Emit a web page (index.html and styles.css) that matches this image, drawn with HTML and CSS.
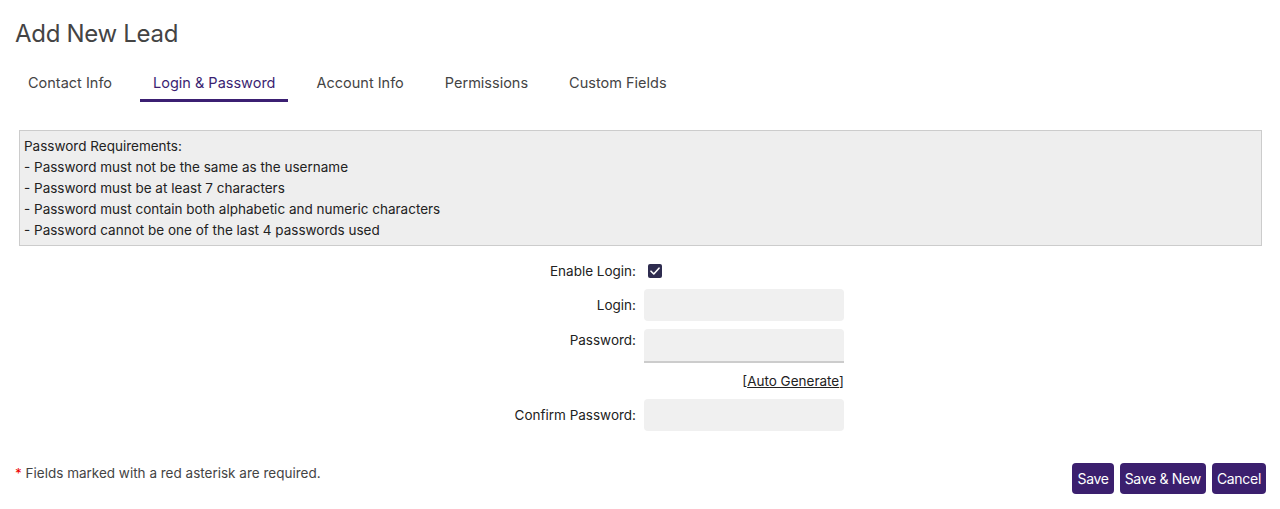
FILE: index.html
```html
<!DOCTYPE html>
<html lang="en">

<head>
    <meta charset="UTF-8">
    <meta name="viewport" content="width=device-width, initial-scale=1.0">
    <title>Add New Lead</title>
    <link rel="stylesheet" href="styles.css">
</head>

<body>
    <h1 class="page-title">Add New Lead</h1>

    <nav class="tabs">
        <a class="tab">Contact Info</a>
        <a class="tab active">Login &amp; Password</a>
        <a class="tab">Account Info</a>
        <a class="tab">Permissions</a>
        <a class="tab">Custom Fields</a>
    </nav>

    <div class="requirements">
        <div>Password Requirements:</div>
        <div>- Password must not be the same as the username</div>
        <div>- Password must be at least 7 characters</div>
        <div>- Password must contain both alphabetic and numeric characters</div>
        <div>- Password cannot be one of the last 4 passwords used</div>
    </div>

    <form class="login-form">
        <div class="row row-check">
            <label class="field-label" for="enableLogin">Enable Login:</label>
            <span class="checkbox" id="enableLogin">
                <svg width="10" height="8" viewBox="0 0 10 8">
                    <path d="M1 4.2 L3.8 7 L9 1.2" fill="none" stroke="#fff" stroke-width="1.6" stroke-linecap="round" stroke-linejoin="round" />
                </svg>
            </span>
        </div>
        <div class="row">
            <label class="field-label" for="login">Login:</label>
            <input type="text" id="login" class="field">
        </div>
        <div class="row row-password">
            <label class="field-label" for="password">Password:</label>
            <input type="password" id="password" class="field field-underline">
        </div>
        <div class="row row-link">
            <span class="auto-gen">[<a href="#">Auto Generate</a>]</span>
        </div>
        <div class="row">
            <label class="field-label" for="confirm">Confirm Password:</label>
            <input type="password" id="confirm" class="field">
        </div>
    </form>

    <footer class="footer">
        <p class="note"><span class="star">*</span> Fields marked with a red asterisk are required.</p>
        <div class="actions">
            <button type="button">Save</button>
            <button type="button">Save &amp; New</button>
            <button type="button">Cancel</button>
        </div>
    </footer>
</body>

</html>
```

FILE: styles.css
```css
body {
    margin: 0;
    padding: 0 14px 0 15px;
    font-family: Inter, "Noto Sans", sans-serif;
    color: #3f3f46;
    background: #fff;
}

.page-title {
    margin: 0;
    padding-top: 19px;
    font-size: 24px;
    font-weight: 400;
    line-height: 30px;
    color: #444;
    letter-spacing: -0.3px;
}

.tabs {
    display: flex;
    gap: 15px;
    margin-top: 24px;
}

.tab {
    padding: 0 13px 7px;
    font-size: 14.5px;
    line-height: 19px;
    color: #444;
    border-bottom: 3px solid transparent;
    cursor: pointer;
}

.tab.active {
    color: #3b1f72;
    border-bottom-color: #3b1f72;
}

.requirements {
    margin: 28px 4px 0 4px;
    padding: 5px 4px 4px;
    background-color: #eee;
    border: 1px solid #ccc;
    font-size: 13.5px;
    line-height: 21px;
    color: #222;
}

.login-form {
    display: flex;
    flex-direction: column;
    gap: 8px;
    margin-top: 15px;
}

.row {
    display: flex;
    align-items: center;
    gap: 8px;
}

.field-label {
    width: 621px;
    text-align: right;
    font-size: 13.5px;
    color: #222;
}

.row-check {
    height: 20px;
}

.checkbox {
    display: flex;
    align-items: center;
    justify-content: center;
    width: 14px;
    height: 14px;
    margin-left: 4px;
    background-color: #2e2c4f;
    border-radius: 2px;
}

.field {
    width: 200px;
    height: 32px;
    box-sizing: border-box;
    padding: 0 8px;
    background-color: #f0f0f0;
    border: none;
    border-radius: 4px;
    font-family: inherit;
}

.row-password {
    align-items: flex-start;
}

.row-password .field-label {
    padding-top: 3px;
}

.field-underline {
    height: 34px;
    border-bottom: 2px solid #ccc;
    border-radius: 4px 4px 0 0;
}

.row-link {
    width: 829px;
    justify-content: flex-end;
    margin-top: 2px;
    margin-bottom: 2px;
}

.auto-gen {
    font-size: 13.5px;
    color: #222;
}

.auto-gen a {
    color: #222;
}

.footer {
    display: flex;
    justify-content: space-between;
    align-items: flex-start;
    margin-top: 32px;
}

.note {
    margin: 0;
    padding-top: 2px;
    font-size: 13.5px;
    color: #444;
}

.star {
    color: #e00;
}

.actions {
    display: flex;
    gap: 6px;
}

button {
    height: 31px;
    padding: 0 5px;
    background-color: #3b1f6e;
    color: #fff;
    border: none;
    border-radius: 4px;
    font-family: inherit;
    font-size: 14px;
    letter-spacing: -0.3px;
    cursor: pointer;
}
```
